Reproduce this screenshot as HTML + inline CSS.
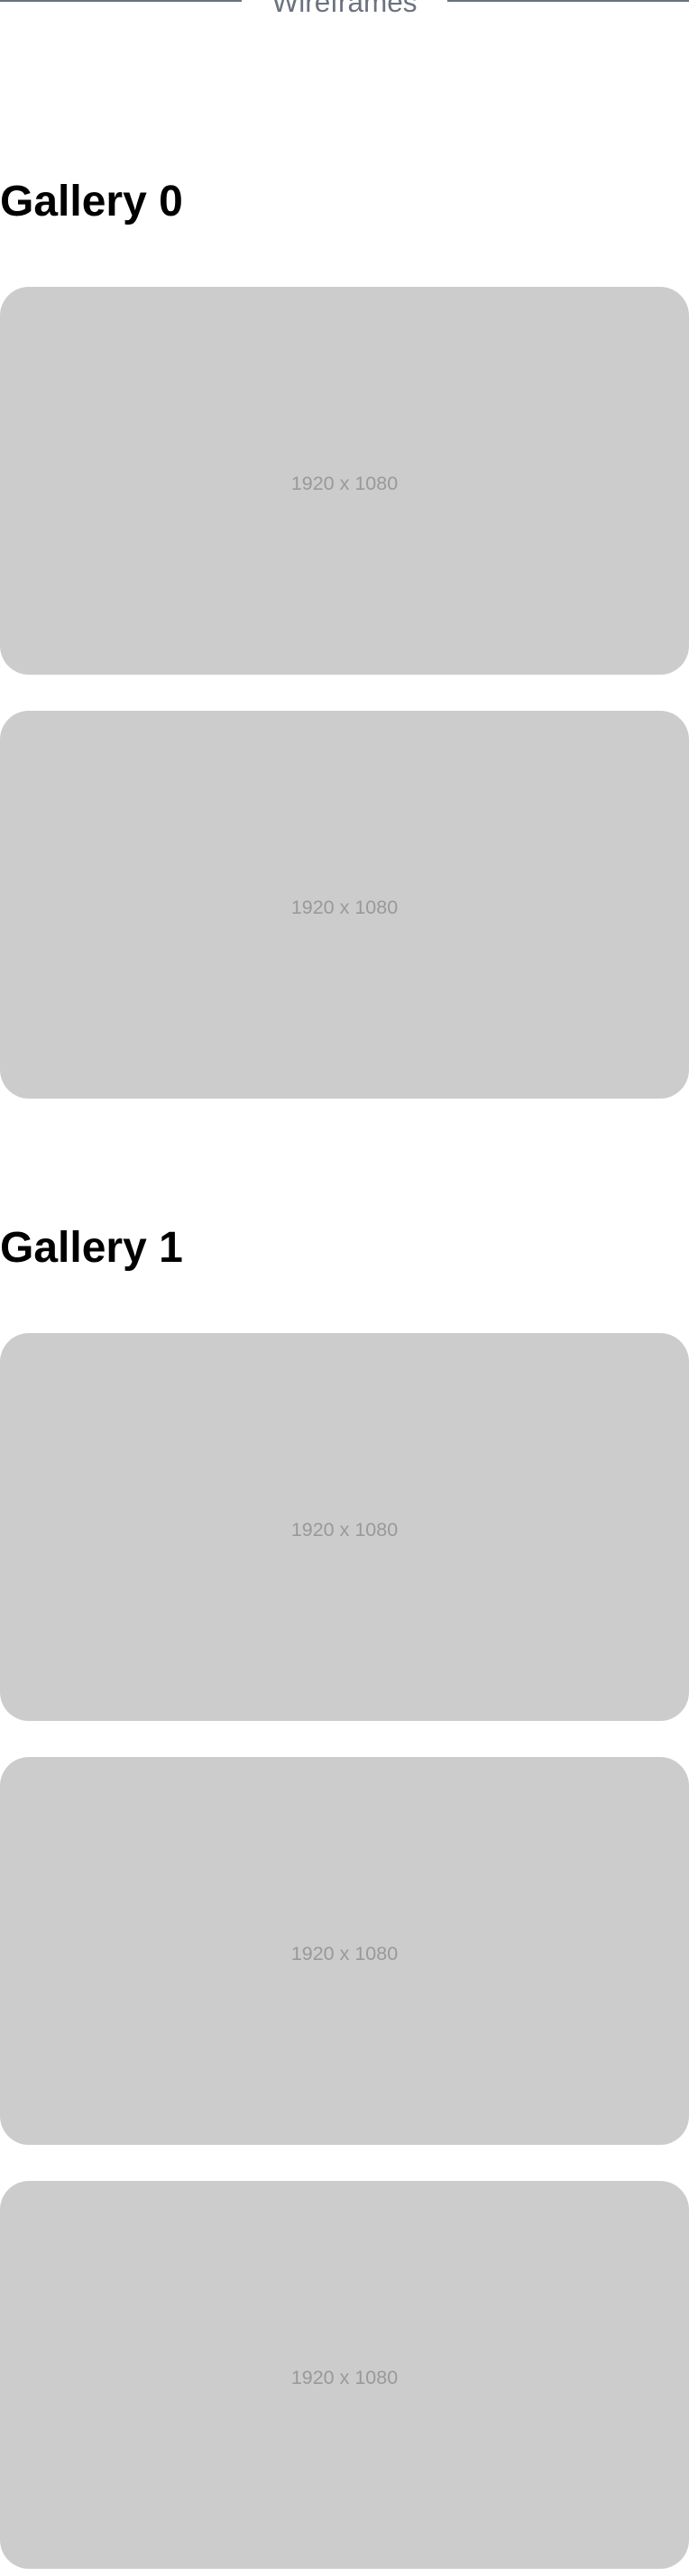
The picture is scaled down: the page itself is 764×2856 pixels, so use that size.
<!DOCTYPE html>
<html><head><meta charset="utf-8"><style>
*{margin:0;padding:0;box-sizing:border-box}
html,body{width:764px;height:2856px;background:#fff;overflow:hidden;font-family:"Liberation Sans",sans-serif;position:relative}
.line{position:absolute;top:0;height:2px;background:#6b7280}
.wf{position:absolute;left:0;width:764px;top:-16px;text-align:center;font-size:31.5px;color:#6b7280;line-height:36px}
h2{position:absolute;left:0;font-size:48px;font-weight:bold;color:#000;line-height:48px}
.card{position:absolute;left:0;width:764px;height:430px;background:#cccccc;border-radius:32px;display:flex;align-items:center;justify-content:center;color:#999;font-size:21.5px;padding-top:6px}
</style></head><body>
<div class="line" style="left:0;width:268px"></div>
<div class="line" style="left:496px;width:268px"></div>
<div class="wf">Wireframes</div>
<h2 style="top:200px">Gallery 0</h2>
<div class="card" style="top:318px">1920 x 1080</div>
<div class="card" style="top:788px">1920 x 1080</div>
<h2 style="top:1360px">Gallery 1</h2>
<div class="card" style="top:1478px">1920 x 1080</div>
<div class="card" style="top:1948px">1920 x 1080</div>
<div class="card" style="top:2418px">1920 x 1080</div>
</body></html>
